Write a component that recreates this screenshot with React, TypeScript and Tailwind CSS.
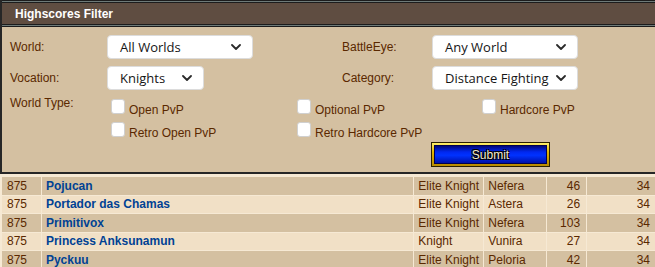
import React from "react";

const Chevron = () => (
  <svg width="10" height="6" viewBox="0 0 10 6" className="shrink-0">
    <polyline points="1,1 5,5 9,1" fill="none" stroke="#2a2a2a" strokeWidth="1.8" strokeLinecap="round" strokeLinejoin="round" />
  </svg>
);

const Select = ({ w, children }: { w: string; children: React.ReactNode }) => (
  <div
    className={`${w} h-[24px] bg-white rounded-[4px] border border-[#dcdcdc] flex items-center justify-between pl-[12px] pr-[11px] text-[13px] text-[#151515] font-['Open_Sans','Noto_Sans',sans-serif]`}
  >
    <span className="leading-none">{children}</span>
    <Chevron />
  </div>
);

const Check = ({ label }: { label: string }) => (
  <div className="flex items-start h-[23px]">
    <div className="mt-[4px] w-[14px] h-[15px] bg-white rounded-[3px] border border-[#d0d0d0] shrink-0" />
    <span className="ml-[4px] mt-[8px] leading-[14px]">{label}</span>
  </div>
);

const BorderLine = () => (
  <div className="h-[3px] bg-[linear-gradient(to_bottom,#1c1c1c_0,#1c1c1c_33%,#6e7a78_33%,#6e7a78_60%,#1c1c1c_60%)]" />
);

const rows = [
  { name: "Pojucan", voc: "Elite Knight", world: "Nefera", lvl: "46", pts: "34" },
  { name: "Portador das Chamas", voc: "Elite Knight", world: "Astera", lvl: "26", pts: "34" },
  { name: "Primitivox", voc: "Elite Knight", world: "Nefera", lvl: "103", pts: "34" },
  { name: "Princess Anksunamun", voc: "Knight", world: "Vunira", lvl: "27", pts: "34" },
  { name: "Pyckuu", voc: "Elite Knight", world: "Peloria", lvl: "42", pts: "34" },
];

export default function App() {
  return (
    <div className="w-[655px] h-[267px] overflow-hidden bg-[#f6e9d4] font-['Liberation_Sans',Arial,sans-serif] text-[12px] text-[#5a2800]">
      {/* Filter box */}
      <div className="border-l-2 border-b-2 border-[#262626] bg-[#d4c0a1]">
        <BorderLine />
        <div className="h-[21px] bg-[#5f4d41] flex items-center pl-[13px] text-white font-bold text-[12px]">
          Highscores Filter
        </div>
        <BorderLine />
        <div className="pl-[8px] pt-[8px] pb-[5px]">
          <div className="grid grid-cols-[97px_235px_90px_1fr] gap-y-[7px] items-center">
            <span>World:</span>
            <Select w="w-[146px]">All Worlds</Select>
            <span>BattleEye:</span>
            <Select w="w-[146px]">Any World</Select>
            <span>Vocation:</span>
            <Select w="w-[97px]">Knights</Select>
            <span>Category:</span>
            <Select w="w-[146px]">Distance Fighting</Select>
          </div>
          <div className="flex mt-[5px]">
            <span className="w-[97px] leading-[14px] pt-[1px]">World Type:</span>
            <div className="ml-[4px] grid grid-cols-[186px_185px_1fr]">
              <Check label="Open PvP" />
              <Check label="Optional PvP" />
              <Check label="Hardcore PvP" />
              <Check label="Retro Open PvP" />
              <Check label="Retro Hardcore PvP" />
            </div>
          </div>
          <div className="flex mt-[1px] pl-[421px]">
            <div className="w-[119px] h-[25px] border border-[#2b2000] bg-[linear-gradient(to_bottom,#fff06a,#e2b400_40%,#b88a00)] p-[2px]">
              <div className="w-full h-full border border-[#000050] bg-[linear-gradient(to_bottom,#00087a,#0028f0_35%,#0032ff_55%,#0010a8)] flex items-center justify-center text-[12px] text-[#f3e8c6] [text-shadow:1px_1px_0_#000,-1px_-1px_0_#000,1px_-1px_0_#000,-1px_1px_0_#000]">
                Submit
              </div>
            </div>
          </div>
        </div>
      </div>

      {/* Table */}
      <div className="mt-[3px] ml-[2px] flex flex-col gap-[1px]">
        {rows.map((r, i) => (
          <div
            key={r.name}
            className={`flex gap-[1px] h-[17.5px] ${i % 2 === 0 ? "" : ""}`}
          >
            {[
              { c: "w-[39px] pl-[5px]", t: "875" },
              { c: "w-[372px] pl-[4px] font-bold text-[#004294]", t: r.name },
              { c: "w-[69px] pl-[4px]", t: r.voc },
              { c: "w-[62px] pl-[4px]", t: r.world },
              { c: "w-[39px] pr-[6px] justify-end", t: r.lvl },
              { c: "w-[68px] pr-[5px] justify-end", t: r.pts },
            ].map((cell, j) => (
              <div
                key={j}
                className={`${cell.c} flex items-center whitespace-nowrap ${i % 2 === 0 ? "bg-[#d4c0a1]" : "bg-[#f1e0c6]"}`}
              >
                {cell.t}
              </div>
            ))}
          </div>
        ))}
      </div>
    </div>
  );
}
